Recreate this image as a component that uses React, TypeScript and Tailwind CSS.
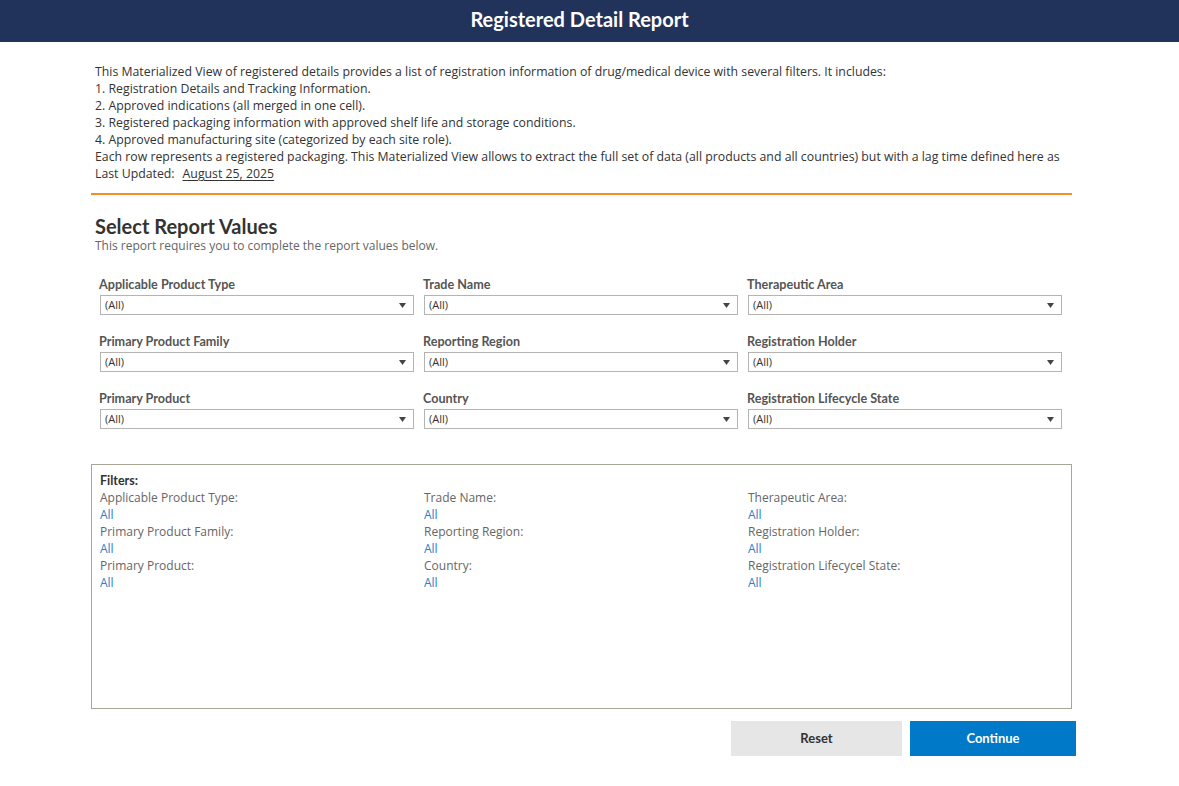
import React from 'react';

const FONT = { fontFamily: 'Lato, "Open Sans", Arial, sans-serif' };
const BODY = { fontFamily: '"Open Sans", Lato, Arial, sans-serif' };

const PARAMS = [
  'Applicable Product Type',
  'Trade Name',
  'Therapeutic Area',
  'Primary Product Family',
  'Reporting Region',
  'Registration Holder',
  'Primary Product',
  'Country',
  'Registration Lifecycle State',
];

const SUMMARY = [
  'Applicable Product Type:',
  'Trade Name:',
  'Therapeutic Area:',
  'Primary Product Family:',
  'Reporting Region:',
  'Registration Holder:',
  'Primary Product:',
  'Country:',
  'Registration Lifecycel State:',
];

const Dropdown: React.FC<{ label: string }> = ({ label }) => (
  <div className="flex flex-col">
    <div className="text-[12.6px] leading-[16px] font-bold text-[#555555]">{label}</div>
    <div className="mt-[2px] ml-px h-[20px] border border-[#b4b4b4] bg-white flex items-center justify-between pl-[4px] pr-[7px]">
      <span className="text-[11px] text-[#333333]" style={BODY}>(All)</span>
      <svg width="7" height="5" viewBox="0 0 7 5" className="text-[#444444]">
        <path d="M0 0 L7 0 L3.5 5 Z" fill="currentColor" />
      </svg>
    </div>
  </div>
);

const App: React.FC = () => {
  return (
    <div className="w-full h-[786px] bg-white overflow-hidden" style={FONT}>
      <div className="h-[42px] bg-[#21335a] flex items-center justify-center pr-[20px] pb-[5px]">
        <h1 className="text-white font-bold text-[20px]">Registered Detail Report</h1>
      </div>

      <div className="pl-[91px] pr-[107px]">
        {/* Description */}
        <div className="mt-[21px] pl-[4px] text-[12.3px] leading-[17px] text-[#333333]" style={BODY}>
          <p>This Materialized View of registered details provides a list of registration information of drug/medical device with several filters. It includes:</p>
          <p>1. Registration Details and Tracking Information.</p>
          <p>2. Approved indications (all merged in one cell).</p>
          <p>3. Registered packaging information with approved shelf life and storage conditions.</p>
          <p>4. Approved manufacturing site (categorized by each site role).</p>
          <p className="whitespace-nowrap">Each row represents a registered packaging. This Materialized View allows to extract the full set of data (all products and all countries) but with a lag time defined here as</p>
          <p>
            Last Updated:<span className="ml-[8px] underline underline-offset-2">August 25, 2025</span>
          </p>
        </div>

        <div className="mt-[11px] h-[2px] bg-[#f28e2b]" />

        {/* Select values */}
        <div className="pl-[4px] mt-[19px]">
          <h2 className="text-[20px] leading-[24px] font-bold text-[#333333]">Select Report Values</h2>
          <p className="text-[12px] leading-[16px] text-[#666666]" style={BODY}>This report requires you to complete the report values below.</p>
        </div>

        <div className="mt-[23px] ml-[8px] grid grid-cols-[315px_315px_315px] gap-x-[9px] gap-y-[19px]">
          {PARAMS.map(p => (
            <Dropdown key={p} label={p} />
          ))}
        </div>

        {/* Filters summary */}
        <div className="mt-[35px] h-[245px] border border-[#a8a797] pt-[8px] pl-[8px]">
          <div className="text-[12.5px] leading-[16px] font-bold text-[#333333]">Filters:</div>
          <div className="grid grid-cols-[324px_324px_324px]" style={BODY}>
            {SUMMARY.map(s => (
              <div key={s} className="text-[12px] leading-[17px]">
                <div className="text-[#666666]">{s}</div>
                <div className="text-[#2a7ec7]">All</div>
              </div>
            ))}
          </div>
        </div>

        {/* Actions */}
        <div className="mt-[12px] flex justify-end gap-[8px] -mr-[4px]">
          <button className="w-[171px] h-[35px] bg-[#e6e6e6] text-[#333333] text-[13px] font-bold">Reset</button>
          <button className="w-[166px] h-[35px] bg-[#0079c8] text-white text-[13px] font-bold">Continue</button>
        </div>
      </div>
    </div>
  );
};

export default App;
